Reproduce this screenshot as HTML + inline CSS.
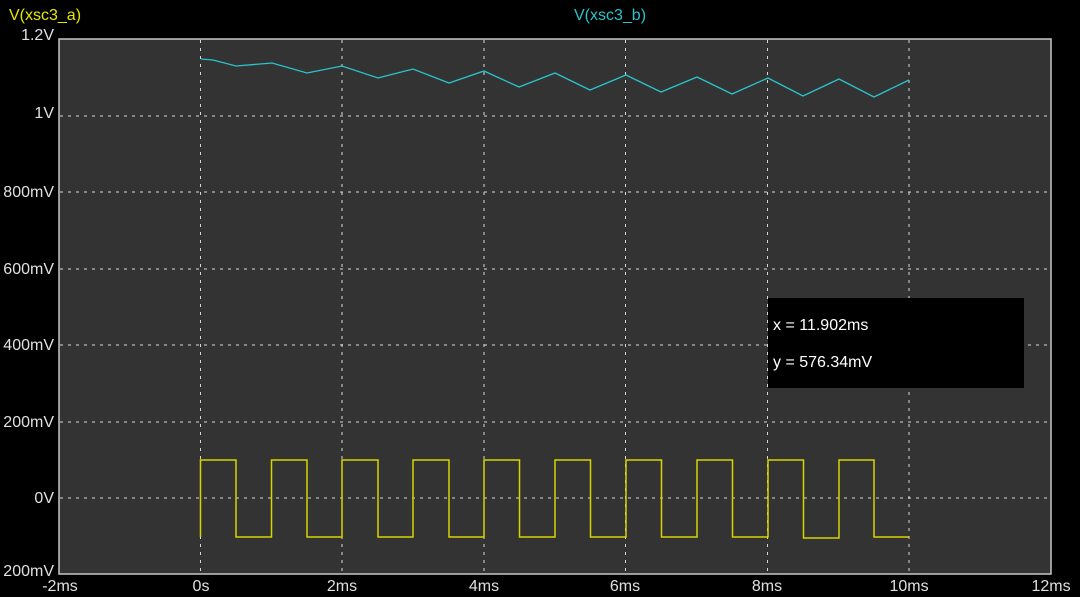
<!DOCTYPE html>
<html><head><style>
html,body{margin:0;padding:0;background:#000;width:1080px;height:597px;overflow:hidden;font-family:"Liberation Sans",sans-serif}
</style></head><body>
<svg width="1080" height="597" viewBox="0 0 1080 597" xmlns="http://www.w3.org/2000/svg" style="display:block">
<rect x="0" y="0" width="1080" height="597" fill="#000"/>
<rect x="59" y="39" width="992" height="535" fill="#333333" stroke="#c8c8c8" stroke-width="1.5"/>
<g stroke="#d8d8d8" stroke-width="1" stroke-dasharray="3,5">
<line x1="200.5" y1="40" x2="200.5" y2="573"/>
<line x1="342" y1="40" x2="342" y2="573"/>
<line x1="484" y1="40" x2="484" y2="573"/>
<line x1="625.5" y1="40" x2="625.5" y2="573"/>
<line x1="767.5" y1="40" x2="767.5" y2="573"/>
<line x1="909" y1="40" x2="909" y2="573"/>
<line x1="60" y1="116" x2="1050" y2="116"/>
<line x1="60" y1="192" x2="1050" y2="192"/>
<line x1="60" y1="269" x2="1050" y2="269"/>
<line x1="60" y1="345" x2="1050" y2="345"/>
<line x1="60" y1="422" x2="1050" y2="422"/>
<line x1="60" y1="498" x2="1050" y2="498"/>
</g>
<polyline fill="none" stroke="#29c4cc" stroke-width="1.3" points="201,59 213,60 236,66 272,63 307,73 342,66 378,78 413,69 449,83 484,71 519,87 555,73 590,90 626,75 661,92 697,77 732,94 768,78 803,96 839,79 874,97 909,80"/>
<polyline fill="none" stroke="#d8d400" stroke-width="1.5" points="200.5,537 200.5,460 236,460 236,537 271.5,537 271.5,460 307,460 307,537 342,537 342,460 378,460 378,537 413,537 413,460 449,460 449,537 484,537 484,460 519.5,460 519.5,537 555,537 555,460 590.5,460 590.5,537 626,537 626,460 661.5,460 661.5,537 697,537 697,460 732.5,460 732.5,537 768,537 768,460 803.5,460 803.5,538 839,538 839,460 874,460 874,537 909,537"/>
<rect x="768" y="298" width="256" height="90" fill="#000"/>
<g fill="#fff" font-size="16">
<text x="773" y="330">x = 11.902ms</text>
<text x="773" y="367">y = 576.34mV</text>
</g>
<text x="9" y="20" fill="#e6e600" font-size="16">V(xsc3_a)</text>
<text x="574" y="20" fill="#29c4cc" font-size="16">V(xsc3_b)</text>
<g fill="#e0e0e0" font-size="16" text-anchor="end">
<text x="54" y="40">1.2V</text>
<text x="54" y="118">1V</text>
<text x="54" y="197">800mV</text>
<text x="54" y="274">600mV</text>
<text x="54" y="350">400mV</text>
<text x="54" y="427">200mV</text>
<text x="54" y="503">0V</text>
<text x="54" y="576">200mV</text>
</g>
<g fill="#e0e0e0" font-size="16" text-anchor="middle">
<text x="60" y="591">-2ms</text>
<text x="201" y="591">0s</text>
<text x="342" y="591">2ms</text>
<text x="484" y="591">4ms</text>
<text x="625" y="591">6ms</text>
<text x="767" y="591">8ms</text>
<text x="909" y="591">10ms</text>
<text x="1051" y="591">12ms</text>
</g>
</svg>
</body></html>
